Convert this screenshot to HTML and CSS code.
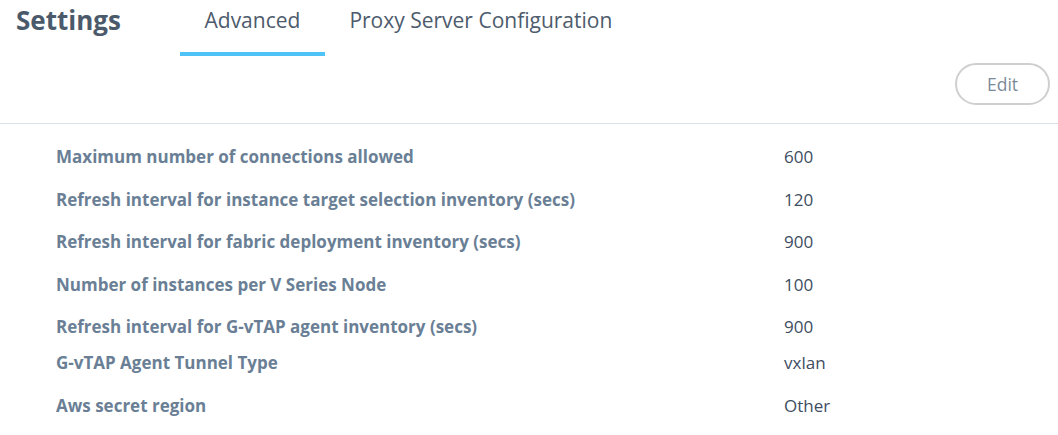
FILE: index.html
```html
<!DOCTYPE html>
<html>
<head>
<meta charset="utf-8">
<link rel="stylesheet" href="styles.css">
</head>
<body>
<div class="page">
  <header class="top">
    <h1 class="title">Settings</h1>
    <nav class="tabs">
      <div class="tab active">Advanced</div>
      <div class="tab">Proxy Server Configuration</div>
    </nav>
  </header>
  <div class="toolbar">
    <button class="edit">Edit</button>
  </div>
  <div class="list">
    <div class="row"><div class="label">Maximum number of connections allowed</div><div class="value">600</div></div>
    <div class="row"><div class="label">Refresh interval for instance target selection inventory (secs)</div><div class="value">120</div></div>
    <div class="row"><div class="label">Refresh interval for fabric deployment inventory (secs)</div><div class="value">900</div></div>
    <div class="row"><div class="label">Number of instances per V Series Node</div><div class="value">100</div></div>
    <div class="row short"><div class="label">Refresh interval for G-vTAP agent inventory (secs)</div><div class="value">900</div></div>
    <div class="row"><div class="label">G-vTAP Agent Tunnel Type</div><div class="value">vxlan</div></div>
    <div class="row"><div class="label">Aws secret region</div><div class="value">Other</div></div>
  </div>
</div>
</body>
</html>
```
FILE: styles.css
```css
* { box-sizing: border-box; }
html, body { margin: 0; padding: 0; background: #fff; }
body { font-family: "Open Sans", Lato, sans-serif; }
.page { width: 1058px; height: 435px; overflow: hidden; }
.top { display: flex; align-items: flex-start; height: 56px; }
.title { margin: 0; padding: 2px 0 0 16px; font-size: 26px; font-weight: 700; color: #4a5a6b; width: 180px; line-height: 36px; }
.tabs { display: flex; }
.tab { font-size: 21px; color: #4d5b6c; padding: 4px 24.5px 0; height: 56px; line-height: 32px; }
.tab.active { border-bottom: 4px solid #4fc3f7; }
.toolbar { display: flex; justify-content: flex-end; padding: 7px 8px 0 0; height: 68px; border-bottom: 1px solid #d6e1ea; }
.edit { width: 95px; height: 42px; border: 2px solid #cfcfcf; border-radius: 21px; background: #fff; font-family: inherit; font-size: 17.5px; color: #7b8a99; }
.list { padding: 21px 0 0 56px; }
.row { display: flex; height: 42.5px; align-items: flex-start; line-height: 24px; }
.row.short { height: 36px; }
.label { width: 728px; font-size: 17px; font-weight: 700; color: #6a7f95; }
.value { font-size: 17px; color: #3d4d5f; }
```
